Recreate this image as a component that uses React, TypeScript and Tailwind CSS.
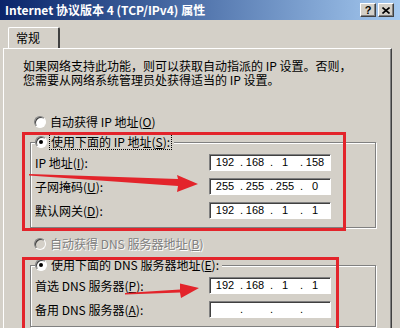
import type { ReactNode } from 'react';

function Radio({ checked, disabled }: { checked?: boolean; disabled?: boolean }) {
    return (
        <div
            className={`w-[12px] h-[12px] shrink-0 rounded-full border border-t-[#808080] border-l-[#808080] border-r-white border-b-white shadow-[inset_1px_1px_0_#404040] flex items-center justify-center ${disabled ? 'bg-[#d4d0c8]' : 'bg-white'}`}
        >
            {checked && <div className="w-[4px] h-[4px] rounded-full bg-black" />}
        </div>
    );
}

function IpBox({ parts }: { parts?: string[] }) {
    const segs = parts ?? ['', '', '', ''];
    return (
        <div className="w-[122px] h-[17px] bg-white border border-t-[#808080] border-l-[#808080] border-r-white border-b-white shadow-[inset_1px_1px_0_#404040] flex items-center pl-[3px] font-['Liberation_Sans',sans-serif] text-[11px] text-black">
            {segs.map((s, i) => (
                <div key={i} className="flex items-center">
                    {i > 0 && <span className="w-[6px] text-right leading-none">.</span>}
                    <span className="w-[24px] text-center leading-none">{s}</span>
                </div>
            ))}
        </div>
    );
}

function FieldRow({ label, parts }: { label: ReactNode; parts?: string[] }) {
    return (
        <div className="h-[17px] flex items-center pl-[4px]">
            <div className="w-[174px] whitespace-nowrap">{label}</div>
            <IpBox parts={parts} />
        </div>
    );
}

function TitleButton({ children }: { children: ReactNode }) {
    return (
        <div className="w-[16px] h-[14px] bg-[#d4d0c8] border border-t-white border-l-white border-r-[#404040] border-b-[#404040] shadow-[inset_-1px_-1px_0_#808080] flex items-center justify-center text-[11px] font-bold leading-none text-black font-['Liberation_Sans',sans-serif]">
            {children}
        </div>
    );
}

export default function App() {
    return (
        <div className="relative w-[400px] h-[328px] overflow-hidden bg-[#d4d0c8] text-[12px] text-black font-['Noto_Sans_CJK_SC',sans-serif]">
            {/* Title bar */}
            <div className="h-[20px] bg-gradient-to-r from-[#0a246a] to-[#a6caf0] flex items-center justify-between pl-[5px] pr-[6px]">
                <span className="text-white font-bold text-[12px] leading-none whitespace-nowrap">Internet 协议版本 4 (TCP/IPv4) 属性</span>
                <div className="flex gap-[2px]">
                    <TitleButton>?</TitleButton>
                    <TitleButton>
                        <svg width="8" height="7" viewBox="0 0 8 7">
                            <path d="M0.5 0.5 L7.5 6.5 M7.5 0.5 L0.5 6.5" stroke="black" strokeWidth="1.6" />
                        </svg>
                    </TitleButton>
                </div>
            </div>

            {/* Tab */}
            <div className="pt-[7px] pl-[8px]">
                <div className="w-[52px] h-[21px] border-t border-l border-t-white border-l-white border-r-2 border-r-[#404040] rounded-t-[2px] pl-[7px] pt-[3px] leading-[14px]">
                    常规
                </div>
            </div>

            {/* Panel */}
            <div className="ml-[3px] w-[389px] h-[300px] border-t border-l border-t-white border-l-white border-r border-r-[#404040] shadow-[inset_-1px_0_0_#808080]">
                <div className="pt-[10px] pl-[19px] leading-[14px] whitespace-nowrap">
                    <div>如果网络支持此功能，则可以获取自动指派的 IP 设置。否则，</div>
                    <div>您需要从网络系统管理员处获得适当的 IP 设置。</div>
                </div>

                <div className="mt-[27px] ml-[30px] h-[16px] flex items-center gap-[4px]">
                    <Radio />
                    <span>自动获得 IP 地址(<u>O</u>)</span>
                </div>

                {/* Group 1 */}
                <div className="relative mt-[12px] ml-[26px] w-[346px] border border-[#808080] shadow-[inset_1px_1px_0_#fff,1px_1px_0_#fff] pt-[11px] pb-[8px] flex flex-col gap-[7px]">
                    <div className="absolute -top-[9px] left-[4px] h-[16px] bg-[#d4d0c8] flex items-center gap-[2px] pr-[2px]">
                        <Radio checked />
                        <span className="border border-dotted border-black px-[1px] leading-[14px]">使用下面的 IP 地址(<u>S</u>):</span>
                    </div>
                    <FieldRow label={<>IP 地址(<u>I</u>):</>} parts={['192', '168', '1', '158']} />
                    <FieldRow label={<>子网掩码(<u>U</u>):</>} parts={['255', '255', '255', '0']} />
                    <FieldRow label={<>默认网关(<u>D</u>):</>} parts={['192', '168', '1', '1']} />
                </div>

                <div className="mt-[8px] ml-[30px] h-[16px] flex items-center gap-[4px] text-[#808080] [text-shadow:1px_1px_0_#fff]">
                    <Radio disabled />
                    <span>自动获得 DNS 服务器地址(<u>B</u>)</span>
                </div>

                {/* Group 2 */}
                <div className="relative mt-[13px] ml-[26px] w-[346px] border border-[#808080] shadow-[inset_1px_1px_0_#fff,1px_1px_0_#fff] pt-[11px] pb-[8px] flex flex-col gap-[7px]">
                    <div className="absolute -top-[9px] left-[4px] h-[16px] bg-[#d4d0c8] flex items-center gap-[4px] pr-[3px]">
                        <Radio checked />
                        <span className="leading-[14px]">使用下面的 DNS 服务器地址(<u>E</u>):</span>
                    </div>
                    <FieldRow label={<>首选 DNS 服务器(<u>P</u>):</>} parts={['192', '168', '1', '1']} />
                    <FieldRow label={<>备用 DNS 服务器(<u>A</u>):</>} />
                </div>
            </div>

            {/* Red annotations */}
            <div className="absolute left-[22px] top-[132px] w-[324px] h-[99px] border-[3px] border-[#e3242b] pointer-events-none" />
            <div className="absolute left-[22px] top-[257px] w-[317px] h-[90px] border-[3px] border-[#e3242b] pointer-events-none" />
            <svg className="absolute left-0 top-0 pointer-events-none" width="400" height="328" viewBox="0 0 400 328">
                <polygon points="29,174 178,179 177,175 198,184 177,192 178,186 29,175.5" fill="#e3242b" />
                <polygon points="125,293 180,289.5 180,283.5 199,288 181,298 180,292.5 125,294.5" fill="#e3242b" />
            </svg>
        </div>
    );
}
